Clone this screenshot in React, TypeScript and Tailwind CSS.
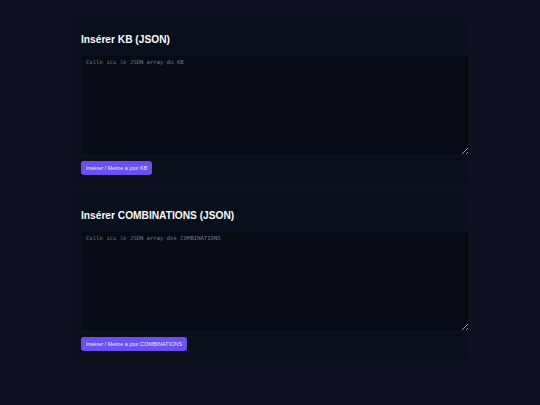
import React, { useState } from 'react';

interface ImportCardProps {
  title: string;
  placeholder: string;
  buttonLabel: string;
}

const ImportCard: React.FC<ImportCardProps> = ({ title, placeholder, buttonLabel }) => {
  const [value, setValue] = useState('');

  return (
    <section className="rounded-md border border-[#0c1221] bg-[#0a0f1c] px-[8px] pt-[14px] pb-[11px]">
      <h2 className="mb-[6px] text-[10.2px] font-bold leading-[16px] text-[#f8fafc]" style={{ fontFamily: '"Liberation Sans", Arial, sans-serif' }}>
        {title}
      </h2>
      <textarea
        value={value}
        onChange={(e) => setValue(e.target.value)}
        placeholder={placeholder}
        className="block h-[102px] w-[389px] resize-y rounded-[2px] border border-[#0d1423] bg-[#060b14] px-[4px] py-[3px] text-[5.6px] leading-[8px] text-[#cbd5e1] outline-none placeholder:text-[#737a86]"
        style={{ fontFamily: '"DejaVu Sans Mono", "Liberation Mono", monospace' }}
      />
      <div className="mt-[5px] flex">
        <button
          type="button"
          className="h-[14px] rounded-[3px] bg-[#6b4ff0] px-[5px] text-[5.5px] leading-[14px] text-[#ede9fe]"
          style={{ fontFamily: '"Liberation Sans", Arial, sans-serif' }}
        >
          {buttonLabel}
        </button>
      </div>
    </section>
  );
};

export default function App() {
  return (
    <div className="min-h-[405px] w-[540px] bg-[#0e0f1f]">
      <div className="box-content flex w-[396px] flex-col gap-[6px] pl-[72px] pt-[17px]">
        <ImportCard
          title="Insérer KB (JSON)"
          placeholder="Colle ici le JSON array du KB"
          buttonLabel="Insérer / Mettre à jour KB"
        />
        <ImportCard
          title="Insérer COMBINATIONS (JSON)"
          placeholder="Colle ici le JSON array des COMBINATIONS"
          buttonLabel="Insérer / Mettre à jour COMBINATIONS"
        />
      </div>
    </div>
  );
}
